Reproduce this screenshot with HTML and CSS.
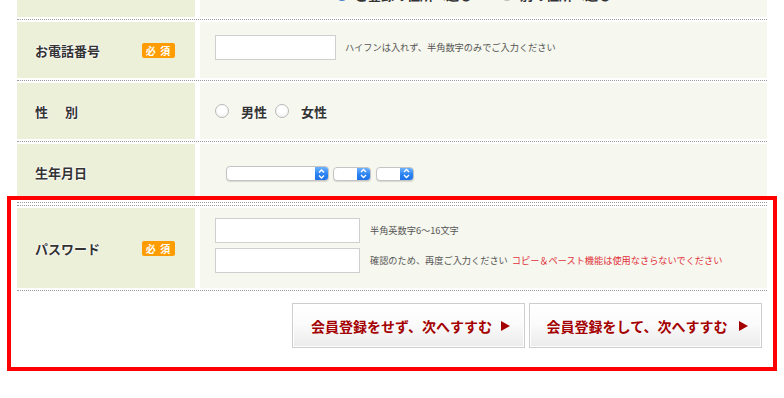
FILE: index.html
```html
<!DOCTYPE html>
<html lang="ja">
<head>
<meta charset="utf-8">
<title>会員登録</title>
<link rel="stylesheet" href="styles.css">
</head>
<body>
<div class="page">
  <div class="form">
    <div class="row">
      <div class="label"></div>
      <div class="value value-top">
        <span class="radio radio-on"></span><span class="opt opt-top">ご登録の住所へ送る</span>
        <span class="radio radio-gap"></span><span class="opt opt-top">別の住所へ送る</span>
      </div>
    </div>
    <div class="row">
      <div class="label"><span class="ltext">お電話番号</span><span class="badge">必 須</span></div>
      <div class="value value-up">
        <span class="input input-tel"></span>
        <span class="hint">ハイフンは入れず、半角数字のみでご入力ください</span>
      </div>
    </div>
    <div class="row">
      <div class="label"><span class="ltext ltext-wide">性　別</span></div>
      <div class="value">
        <span class="radio"></span><span class="opt">男性</span>
        <span class="radio radio-second"></span><span class="opt">女性</span>
      </div>
    </div>
    <div class="row">
      <div class="label"><span class="ltext">生年月日</span></div>
      <div class="value value-down">
        <span class="select select-year"><span class="sel-field"></span><span class="sel-btn"><svg width="13" height="14" viewBox="0 0 13 14"><path d="M4 5.5 L6.5 3 L9 5.5 M4 8.5 L6.5 11 L9 8.5" fill="none" stroke="#fff" stroke-width="1.3"/></svg></span></span>
        <span class="select select-small"><span class="sel-field"></span><span class="sel-btn"><svg width="13" height="13" viewBox="0 0 13 13"><path d="M4 5 L6.5 2.5 L9 5 M4 8 L6.5 10.5 L9 8" fill="none" stroke="#fff" stroke-width="1.3"/></svg></span></span>
        <span class="select select-small select-last"><span class="sel-field"></span><span class="sel-btn"><svg width="13" height="13" viewBox="0 0 13 13"><path d="M4 5 L6.5 2.5 L9 5 M4 8 L6.5 10.5 L9 8" fill="none" stroke="#fff" stroke-width="1.3"/></svg></span></span>
      </div>
    </div>
  </div>

  <div class="pw-section">
    <div class="row row-pw">
      <div class="label"><span class="ltext">パスワード</span><span class="badge">必 須</span></div>
      <div class="value value-pw">
        <div class="pw-line">
          <span class="input input-pw"></span>
          <span class="hint hint-pw">半角英数字6〜16文字</span>
        </div>
        <div class="pw-line">
          <span class="input input-pw"></span>
          <span class="hint hint-pw">確認のため、再度ご入力ください</span>
          <span class="hint hint-warn">コピー＆ペースト機能は使用なさらないでください</span>
        </div>
      </div>
    </div>
    <div class="actions">
      <button class="btn" type="button"><span>会員登録をせず、次へすすむ</span><svg class="tri" width="9" height="10" viewBox="0 0 9 10"><polygon points="0,0 9,5 0,10" fill="#a40000"/></svg></button>
      <button class="btn btn-wide" type="button"><span>会員登録をして、次へすすむ</span><svg class="tri" width="9" height="10" viewBox="0 0 9 10"><polygon points="0,0 9,5 0,10" fill="#a40000"/></svg></button>
    </div>
  </div>

  <div class="highlight"></div>
</div>
</body>
</html>
```

FILE: styles.css
```css
* { box-sizing: border-box; }

html, body {
  margin: 0;
  padding: 0;
  background: #fff;
}

body {
  font-family: "Noto Sans CJK JP", "Noto Sans", sans-serif;
  color: #333;
  overflow: hidden;
}

.page {
  position: relative;
  display: flow-root;
  width: 784px;
  height: 398px;
  padding-left: 17px;
  overflow: hidden;
}

.form {
  width: 750px;
  margin-top: -39px;
}

.row {
  display: flex;
  gap: 5px;
  height: 59px;
  padding-bottom: 2px;
  border-bottom: 1px dotted #9a9a9a;
  margin-bottom: 2px;
}

.label {
  width: 178px;
  flex: none;
  background: #edf0d9;
  display: flex;
  align-items: center;
  justify-content: space-between;
  padding: 0 20px 0 18px;
}

.ltext {
  font-size: 13px;
  font-weight: bold;
  color: #333;
  line-height: 1;
  text-shadow: 0 0 2px #fff, 0 0 2px #fff, 0 0 1px #fff;
}

.ltext-wide {
  letter-spacing: 2px;
}

.badge {
  width: 33px;
  height: 15px;
  background: #ff9c00;
  border-radius: 2px;
  color: #fff;
  font-size: 10px;
  font-weight: bold;
  line-height: 15px;
  text-align: center;
  letter-spacing: 1px;
}

.value {
  flex: 1;
  background: #f6f7ee;
  display: flex;
  align-items: center;
  padding-left: 15px;
}

.value-top {
  padding-left: 135px;
  padding-top: 10px;
}

.value-up {
  padding-bottom: 5px;
}

.value-down {
  padding-top: 3px;
}

.radio {
  width: 14px;
  height: 14px;
  border-radius: 50%;
  border: 1px solid #b9b9b9;
  background: radial-gradient(circle at 50% 35%, #fff 40%, #ececec 100%);
  flex: none;
}

.radio-on {
  border-color: #3b78c8;
  background: radial-gradient(circle at 50% 50%, #1a2f55 0 2px, #4f9cf4 3px, #2a72d8 100%);
}

.radio-gap {
  margin-left: 28px;
}

.radio-second {
  margin-left: 8px;
}

.opt {
  font-size: 13px;
  font-weight: bold;
  color: #333;
  line-height: 1;
  margin-left: 12px;
  text-shadow: 0 0 2px #fff, 0 0 2px #fff;
}

.opt-top {
  margin-left: 6px;
}

.input {
  display: block;
  background: #fff;
  border: 1px solid #cfcfcf;
  flex: none;
}

.input-tel {
  width: 121px;
  height: 25px;
}

.input-pw {
  width: 145px;
  height: 25px;
}

.hint {
  font-size: 9.2px;
  color: #555;
  line-height: 1;
  margin-left: 9px;
  white-space: nowrap;
}

.hint-pw {
  margin-left: 10px;
}

.hint-warn {
  color: #e2303a;
  margin-left: 4px;
}

.select {
  display: flex;
  height: 15px;
  border-radius: 4px;
  border: 1px solid #c4c4c4;
  box-shadow: 0 1px 1px rgba(0,0,0,0.12);
  overflow: hidden;
  background: #fff;
  flex: none;
}

.select-year {
  width: 103px;
  margin-left: 11px;
}

.select-small {
  width: 38px;
  height: 14px;
  margin-left: 4px;
}

.select-last {
  margin-left: 5px;
}

.sel-field {
  flex: 1;
}

.sel-btn {
  width: 13px;
  flex: none;
  background: linear-gradient(#6fb2ff, #2a83f2 55%, #1e72e6);
  display: flex;
  align-items: center;
  justify-content: center;
}

.sel-btn svg {
  display: block;
}

.pw-section {
  width: 750px;
  margin-top: 2px;
  border-top: 1px dotted #9a9a9a;
  padding-top: 2px;
}

.row-pw {
  height: 83px;
  margin-bottom: 0;
}

.value-pw {
  flex-direction: column;
  align-items: flex-start;
  justify-content: center;
  gap: 5px;
  padding-bottom: 5px;
}

.pw-line {
  display: flex;
  align-items: center;
}

.actions {
  display: flex;
  justify-content: flex-end;
  gap: 4px;
  margin-top: 12px;
  padding-right: 5px;
}

.btn {
  width: 233px;
  height: 45px;
  border: 1px solid #cdcdcd;
  box-shadow: inset 0 0 0 1px #fff;
  background: linear-gradient(#ffffff 0%, #fbfbfb 45%, #ebebeb 100%);
  display: flex;
  align-items: center;
  justify-content: center;
  gap: 9px;
  padding: 0 0 0 4px;
  font-family: "Noto Sans CJK JP", "Noto Sans", sans-serif;
  font-size: 14px;
  font-weight: bold;
  color: #a40000;
  cursor: pointer;
}

.btn-wide {
  gap: 12px;
}

.tri {
  display: block;
  flex: none;
}

.highlight {
  position: absolute;
  left: 7px;
  top: 196px;
  width: 770px;
  height: 175px;
  border: 4px solid #ff0000;
  pointer-events: none;
}
```
